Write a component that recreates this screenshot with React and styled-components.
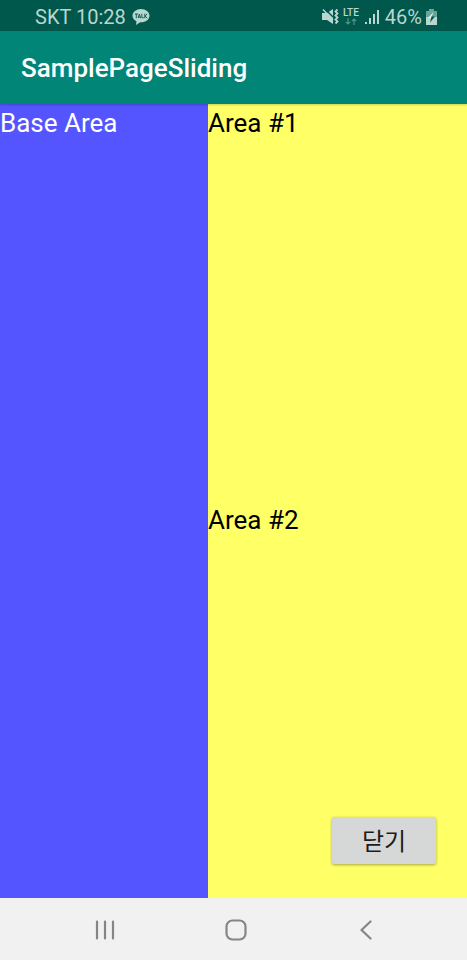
import React from "react";
import styled, { createGlobalStyle } from "styled-components";

const GlobalStyle = createGlobalStyle`
  *, *::before, *::after { box-sizing: border-box; }
  body {
    margin: 0;
    font-family: Roboto, "Noto Sans CJK KR", sans-serif;
  }
`;

const Screen = styled.div`
  display: flex;
  flex-direction: column;
  min-height: 100vh;
`;

const StatusBar = styled.div`
  display: flex;
  align-items: center;
  justify-content: space-between;
  height: 31px;
  padding: 2px 30px 0 35px;
  background: #00574b;
  color: #b9d6d0;
  font-size: 20px;
  line-height: 24px;
`;

const StatusGroup = styled.div`
  display: flex;
  align-items: center;
  gap: ${({ $gap }) => $gap}px;
`;

const NetworkType = styled.div`
  display: flex;
  flex-direction: column;
  align-items: center;
  gap: 1px;
  margin-right: 2px;
  font-size: 10px;
  font-weight: 500;
  line-height: 9px;
`;

const Icon = styled.svg`
  display: block;
  flex: none;
`;

const AppBar = styled.header`
  display: flex;
  align-items: center;
  height: 73px;
  padding: 1px 21px 0;
  background: #008577;
  box-shadow: 0 1px 2px rgba(0, 0, 0, 0.2);
  color: #ffffff;
  z-index: 1;
`;

const Title = styled.h1`
  margin: 0;
  font-size: 26px;
  font-weight: 500;
  line-height: 32px;
`;

const Content = styled.main`
  display: flex;
  flex: 1;
`;

const BaseArea = styled.section`
  flex: 1;
  background: #5555ff;
  color: #ffffff;
`;

const SlidingPage = styled.aside`
  display: flex;
  flex-direction: column;
  width: 259px;
  background: #ffff66;
  color: #000000;
`;

const PageArea = styled.section`
  display: flex;
  flex: 1 1 0;
  flex-direction: column;
  justify-content: space-between;
`;

const AreaLabel = styled.p`
  margin: 0;
  padding-top: 3px;
  font-size: 26px;
  line-height: 32px;
`;

const CloseButton = styled.button`
  align-self: flex-end;
  width: 104px;
  height: 47px;
  margin: 0 31px 34px 0;
  padding: 2px 0 0;
  border: 0;
  border-radius: 2px;
  background: #d6d7d7;
  box-shadow: 0 1px 3px rgba(0, 0, 0, 0.35);
  color: #1c1c1c;
  font-family: inherit;
  font-size: 24px;
  line-height: 32px;
  cursor: pointer;
`;

const NavBar = styled.nav`
  display: flex;
  align-items: center;
  justify-content: space-between;
  height: 62px;
  padding: 2px 81px 0 85px;
  background: #f1f1f1;
`;

const NavButton = styled.button`
  display: flex;
  align-items: center;
  justify-content: center;
  width: 40px;
  height: 40px;
  padding: 0;
  border: 0;
  background: transparent;
  color: #858585;
  cursor: pointer;
`;

function TalkIcon() {
  return (
    <Icon width="18" height="18" viewBox="0 0 18 18" aria-hidden="true">
      <path
        d="M9 1C4.300 1 .500 4 .500 7.700c0 2.400 1.600 4.400 4 5.600L4 17l4.200-2.700H9c4.700 0 8.500-2.900 8.500-6.600S13.700 1 9 1Z"
        fill="currentColor"
      />
      <path
        d="M2.800 6h3M4.300 6v4.200M6 10.200 7.300 6l1.400 4.200M6.500 9h1.700M9.800 5.700v4h2M12.800 5.700v4.500M15.200 5.800l-2.200 2.300 2.300 2.100"
        fill="none"
        stroke="#00574b"
        strokeWidth=".9"
      />
    </Icon>
  );
}

function MuteVibrateIcon() {
  return (
    <Icon width="17" height="18" viewBox="0 0 17 18" fill="none" aria-hidden="true">
      <path d="M0 5h5l6-4v15l-6-4H0Z" fill="currentColor" />
      <path d="M3 1 11 9" stroke="#00574b" strokeWidth="1.500" />
      <path d="M1 1.500 11 12" stroke="currentColor" strokeWidth="1.500" />
      <path
        d="M15.500 1.500 13.500 3.500l2 2-2 2 2 2-2 2 2 2-2 2"
        stroke="currentColor"
        strokeWidth="1.800"
      />
    </Icon>
  );
}

function DataArrowsIcon() {
  return (
    <Icon width="12" height="7" viewBox="0 0 12 7" fill="none" stroke="#539489" strokeWidth="1.200" aria-hidden="true">
      <path d="M3 0v6M.800 3.800 3 6l2.200-2.200M9 7V1M6.800 3.200 9 1l2.200 2.200" />
    </Icon>
  );
}

function SignalIcon() {
  return (
    <Icon width="16" height="16" viewBox="0 0 16 16" fill="currentColor" aria-hidden="true">
      <path d="M0 13h2v2H0ZM4 9h2v6H4ZM8 5h2v10H8ZM12 1h2v14h-2Z" />
    </Icon>
  );
}

function BatteryIcon() {
  return (
    <Icon width="11" height="16" viewBox="0 0 11 16" aria-hidden="true">
      <path d="M3 0h5v2h3v6H0V2h3Z" fill="#6ba49a" />
      <path d="M0 8h11v8H0Z" fill="currentColor" />
      <path d="M7.500 3 2 9h3Z" fill="#e4f3f0" />
      <path d="M5.500 7.500h3.500L4 13.500Z" fill="#00574b" />
    </Icon>
  );
}

function RecentsIcon() {
  return (
    <Icon width="20" height="20" viewBox="0 0 20 20" stroke="currentColor" strokeWidth="2.200" strokeLinecap="round" aria-hidden="true">
      <path d="M2 1.500v17M10 1.500v17M18 1.500v17" />
    </Icon>
  );
}

function HomeIcon() {
  return (
    <Icon width="22" height="22" viewBox="0 0 22 22" fill="none" stroke="currentColor" strokeWidth="2.200" aria-hidden="true">
      <rect x="1.500" y="1.500" width="19" height="19" rx="6" />
    </Icon>
  );
}

function BackIcon() {
  return (
    <Icon width="12" height="20" viewBox="0 0 12 20" fill="none" stroke="currentColor" strokeWidth="2.200" strokeLinecap="round" strokeLinejoin="round" aria-hidden="true">
      <path d="M10.500 1.500 1.500 10l9 8.500" />
    </Icon>
  );
}

export default function App() {
  return (
    <Screen>
      <GlobalStyle />
      <StatusBar>
        <StatusGroup $gap={6}>
          <span>SKT 10:28</span>
          <TalkIcon />
        </StatusGroup>
        <StatusGroup $gap={4}>
          <MuteVibrateIcon />
          <NetworkType>
            <span>LTE</span>
            <DataArrowsIcon />
          </NetworkType>
          <SignalIcon />
          <span>46%</span>
          <BatteryIcon />
        </StatusGroup>
      </StatusBar>
      <AppBar>
        <Title>SamplePageSliding</Title>
      </AppBar>
      <Content>
        <BaseArea>
          <AreaLabel>Base Area</AreaLabel>
        </BaseArea>
        <SlidingPage>
          <PageArea>
            <AreaLabel>Area #1</AreaLabel>
          </PageArea>
          <PageArea>
            <AreaLabel>Area #2</AreaLabel>
            <CloseButton type="button">닫기</CloseButton>
          </PageArea>
        </SlidingPage>
      </Content>
      <NavBar aria-label="System navigation">
        <NavButton type="button" aria-label="Recents">
          <RecentsIcon />
        </NavButton>
        <NavButton type="button" aria-label="Home">
          <HomeIcon />
        </NavButton>
        <NavButton type="button" aria-label="Back">
          <BackIcon />
        </NavButton>
      </NavBar>
    </Screen>
  );
}
